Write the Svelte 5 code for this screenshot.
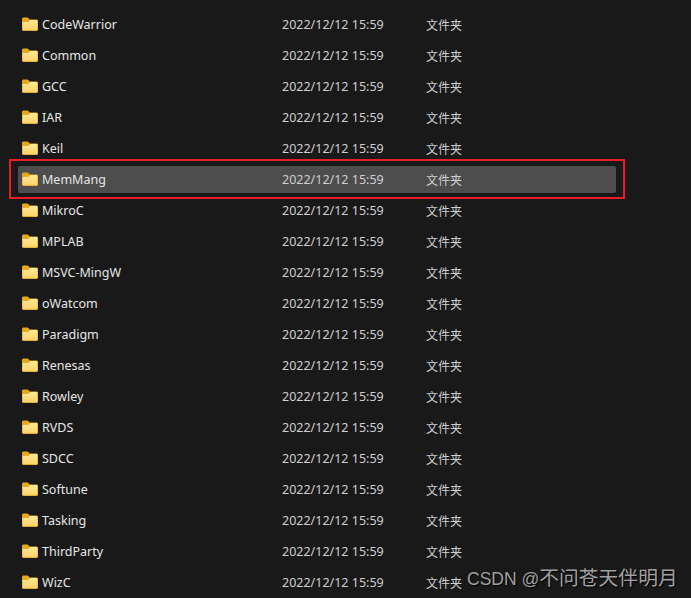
<script>
  const names = [
    "CodeWarrior", "Common", "GCC", "IAR", "Keil", "MemMang", "MikroC", "MPLAB",
    "MSVC-MingW", "oWatcom", "Paradigm", "Renesas", "Rowley", "RVDS", "SDCC",
    "Softune", "Tasking", "ThirdParty", "WizC"
  ];
  const selected = "MemMang";
</script>

<div class="page">
  <div class="list">
    {#each names as name}
      <div class={name === selected ? "row selected" : "row"}>
        <div class="name">
          <svg width="16" height="14" viewBox="0 0 16 14">
            <path d="M0 2C0 1 .7.4 1.600.4h3.600c.5 0 .8.2 1.100.5L7.800 2.500V5H0z" fill="#e9a80f" />
            <path d="M0 4.500 6.400 4.300 7.800 2.500h6.600c.9 0 1.600.7 1.600 1.600v8.300c0 .9-.7 1.500-1.600 1.500H1.600C.7 13.900 0 13.300 0 12.400z" fill="#dfa52a" />
            <path d="M.6 5 6.700 4.800 8.100 3.100h6.300c.6 0 1 .4 1 1v8.300c0 .5-.4.9-1 .9H1.600c-.6 0-1-.4-1-.9z" fill="url(#folder)" />
            <defs>
              <linearGradient id="folder" x1="0" y1="0" x2="0" y2="1">
                <stop offset="0" stop-color="#ffe996" />
                <stop offset="1" stop-color="#fcd468" />
              </linearGradient>
            </defs>
          </svg>
          <span>{name}</span>
        </div>
        <div class="date">2022/12/12 15:59</div>
        <div class="type">文件夹</div>
      </div>
    {/each}
  </div>
  <div class="watermark">CSDN @<span>不问苍天伴明月</span></div>
</div>

<style>
  :global(body) {
    background: #191919;
  }

  .page {
    position: relative;
    height: 598px;
    overflow: hidden;
    background: #191919;
    color: #e6e6e6;
    font-family: "Noto Sans", "Noto Sans CJK SC", sans-serif;
    font-size: 12.5px;
  }

  .list {
    display: flex;
    flex-direction: column;
    gap: 4px;
    padding: 11px 75px 0 18px;
  }

  .row {
    position: relative;
    display: grid;
    grid-template-columns: 264px 144px 1fr;
    align-items: center;
    height: 27px;
    flex-shrink: 0;
    border-radius: 2px;
  }

  .row.selected {
    background: #4d4d4d;
  }

  /* red annotation drawn over the screenshot */
  .row.selected::after {
    content: "";
    position: absolute;
    inset: -7px -9px -6px -9px;
    border: 2px solid #ed1c24;
  }

  .name {
    display: flex;
    align-items: center;
    gap: 4px;
    padding-left: 4px;
  }

  .name svg {
    flex-shrink: 0;
    margin-top: -2px;
  }

  .date,
  .type {
    color: #cfcfcf;
  }

  .type {
    font-size: 12px;
  }

  .watermark {
    position: absolute;
    left: 467px;
    top: 565px;
    font-family: "Liberation Sans", "Noto Sans CJK SC", sans-serif;
    font-size: 17.5px;
    line-height: 26px;
    color: #a0a0a0;
    text-shadow: 1px 1px 1px #000;
    white-space: nowrap;
  }

  .watermark span {
    font-size: 19.8px;
  }
</style>
